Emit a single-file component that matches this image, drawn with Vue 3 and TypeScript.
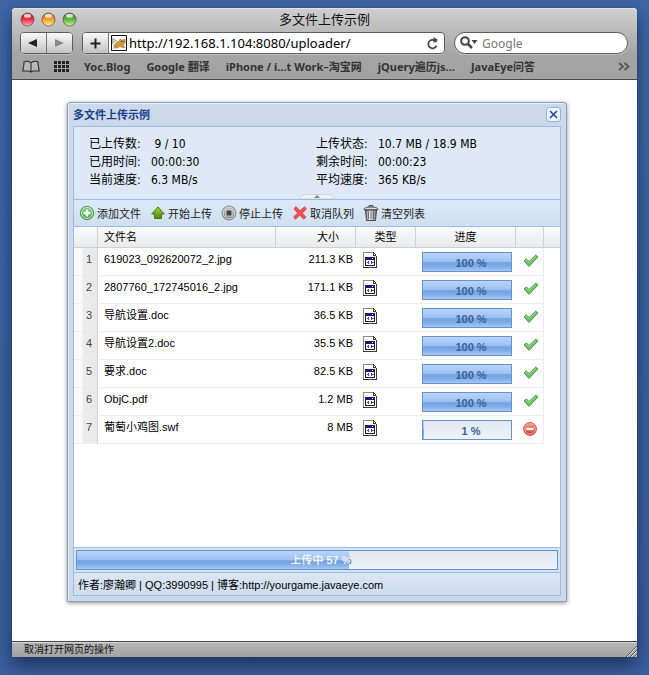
<script setup lang="ts">
import { ref } from 'vue'

interface UploadFile {
  name: string
  size: string
  percent: number
  done: boolean
}

const title = '多文件上传示例'
const address = ref('http://192.168.1.104:8080/uploader/')
const search = ref('')

const uploadedMb = 10.7
const totalMb = 18.9
const share = (uploadedMb / totalMb) * 100
const total = Math.round(share)

const bookmarks: string[] = [
  'Yoc.Blog',
  'Google 翻译',
  'iPhone / i…t Work–淘宝网',
  'jQuery遍历js…',
  'JavaEye问答',
]

const stats: [string, string][] = [
  ['已上传数:', '\u00a09 / 10'],
  ['上传状态:', `${uploadedMb} MB / ${totalMb} MB`],
  ['已用时间:', '00:00:30'],
  ['剩余时间:', '00:00:23'],
  ['当前速度:', '6.3 MB/s'],
  ['平均速度:', '365 KB/s'],
]

const files: UploadFile[] = [
  { name: '619023_092620072_2.jpg', size: '211.3 KB', percent: 100, done: true },
  { name: '2807760_172745016_2.jpg', size: '171.1 KB', percent: 100, done: true },
  { name: '导航设置.doc', size: '36.5 KB', percent: 100, done: true },
  { name: '导航设置2.doc', size: '35.5 KB', percent: 100, done: true },
  { name: '要求.doc', size: '82.5 KB', percent: 100, done: true },
  { name: 'ObjC.pdf', size: '1.2 MB', percent: 100, done: true },
  { name: '葡萄小鸡图.swf', size: '8 MB', percent: 1, done: false },
]
</script>

<template>
  <div class="desktop">
    <svg class="defs" width="0" height="0" aria-hidden="true">
      <defs>
        <linearGradient id="g-red" x2="0" y2="1"><stop offset="0" stop-color="#b8101c" /><stop offset=".5" stop-color="#ee3344" /><stop offset="1" stop-color="#ffb0b4" /></linearGradient>
        <linearGradient id="g-amber" x2="0" y2="1"><stop offset="0" stop-color="#cc5d10" /><stop offset=".5" stop-color="#f6a02c" /><stop offset="1" stop-color="#fff293" /></linearGradient>
        <linearGradient id="g-lime" x2="0" y2="1"><stop offset="0" stop-color="#2f7d23" /><stop offset=".5" stop-color="#5cb83f" /><stop offset="1" stop-color="#c8f59c" /></linearGradient>
        <linearGradient id="g-add" x2="0" y2="1"><stop offset="0" stop-color="#8fd08b" /><stop offset="1" stop-color="#3f9f43" /></linearGradient>
        <linearGradient id="g-up" x2="0" y2="1"><stop offset="0" stop-color="#a5d03a" /><stop offset="1" stop-color="#4c8a0c" /></linearGradient>
        <linearGradient id="g-stop" x2="0" y2="1"><stop offset="0" stop-color="#c9c9c9" /><stop offset="1" stop-color="#777" /></linearGradient>
        <linearGradient id="g-can" x2="1" y2="0"><stop offset="0" stop-color="#777" /><stop offset=".4" stop-color="#eee" /><stop offset="1" stop-color="#777" /></linearGradient>
        <linearGradient id="g-err" x2="0" y2="1"><stop offset="0" stop-color="#f4a090" /><stop offset="1" stop-color="#d93a2e" /></linearGradient>
      </defs>
    </svg>

    <div class="browser">
      <header class="chrome">
        <div class="titlebar">
          <div class="lights">
            <button v-for="(c, i) in ['red', 'amber', 'lime']" :key="c" :aria-label="['关闭', '最小化', '缩放'][i]">
              <svg width="15" height="15" viewBox="0 0 15 15">
                <circle cx="7.5" cy="7.5" r="6.5" :fill="`url(#g-${c})`" stroke="#3a2a2a" stroke-opacity=".55" />
                <ellipse cx="7.5" cy="3.8" rx="3.6" ry="2" fill="#fff" fill-opacity=".75" />
              </svg>
            </button>
          </div>
          <h1>{{ title }}</h1>
          <div class="lights-balance"></div>
        </div>

        <div class="navbar">
          <div class="nav-group">
            <button aria-label="后退"><svg width="10" height="10"><path d="M0 5 9 1v8z" fill="#222" /></svg></button>
            <button aria-label="前进"><svg width="10" height="10"><path d="M10 5 1 1v8z" fill="#888" /></svg></button>
          </div>
          <div class="address">
            <button aria-label="添加书签"><svg width="11" height="11"><path d="M5.500 .5v10M.5 5.500h10" stroke="#222" stroke-width="2" /></svg></button>
            <svg class="favicon" width="16" height="16" viewBox="0 0 16 16">
              <path d="M.5.5h15v15H.5z" fill="#fff" stroke="#111" />
              <path d="m1.500 3 4 2.500L1.500 9zM1.500 14l3-3" fill="#ccc" stroke="#999" stroke-width=".6" />
              <path d="M2.500 11 6 7l2-.5L9 4l1.500 1h2L14 3.500V8l-2 2 2 2.500h-3L9 11.500l-3 1.500H3l2-2z" fill="#cf9a3e" stroke="#8b6424" stroke-width=".5" />
              <path d="M10 6.500h1M12.500 6.500h.8" stroke="#302010" />
            </svg>
            <input v-model="address" aria-label="地址" type="text" />
            <button class="reload" aria-label="重新载入">
              <svg width="13" height="13" viewBox="0 0 13 13"><path d="M10.300 5.200A4.200 4.200 0 1 0 10.500 8.500M6 3h3" fill="none" stroke="#444" stroke-width="1.700" /><path d="M7.500 0 12 3 7.500 6z" fill="#444" /></svg>
            </button>
          </div>
          <label class="search">
            <svg width="18" height="14" viewBox="0 0 18 14"><circle cx="5" cy="5" r="3.800" fill="none" stroke="#444" stroke-width="2" /><path d="m8 8 4 4" stroke="#444" stroke-width="2.500" /><path d="M11.500 4h6l-3 4z" fill="#444" /></svg>
            <input v-model="search" type="text" placeholder="Google" aria-label="Google" />
          </label>
        </div>

        <nav class="bookmarks">
          <button aria-label="书签"><svg width="18" height="13" viewBox="0 0 18 13"><path d="M9 3C7 .5 3.500 1 2 2v2L.8 11h5.400c1 0 2 .4 2.800 1 .8-.6 1.800-1 2.800-1h5.400L16 4V2c-1.500-1-5-1.500-7 1zv9" fill="#b9b9b9" stroke="#2c2c2c" stroke-width="1.100" /></svg></button>
          <button class="top-sites" aria-label="热门站点"><svg width="16" height="11"><g fill="#222"><template v-for="r in 3" :key="r"><rect v-for="c in 4" :key="c" :x="(c - 1) * 4" :y="(r - 1) * 4" width="3" height="3" /></template></g></svg></button>
          <a v-for="b in bookmarks" :key="b" href="#">{{ b }}</a>
          <button class="more" aria-label="更多书签"><svg width="12" height="9"><path d="m1 1 4 3.500L1 8M6.500 1l4 3.500L6.500 8" fill="none" stroke="#555" stroke-width="1.800" /></svg></button>
        </nav>
      </header>

      <main class="page">
        <section class="dialog">
          <header class="dialog-head">
            <h2>{{ title }}</h2>
            <button aria-label="关闭窗口"><svg width="9" height="9"><path d="m1 1 7 7M8 1 1 8" stroke="#24479b" stroke-width="1.600" /></svg></button>
          </header>
          <div class="dialog-body">
            <div class="summary">
              <dl>
                <div v-for="s in stats" :key="s[0]"><dt>{{ s[0] }}</dt><dd>{{ s[1] }}</dd></div>
              </dl>
              <button class="collapse" aria-label="折叠"><svg width="36" height="5"><path d="M0 5 4 .5h28L36 5z" fill="#eef1f3" stroke="#c9d3df" /><path d="m15 4 3-3 3 3z" fill="#888" /></svg></button>
            </div>

            <div class="toolbar">
              <button>
                <svg width="16" height="16" viewBox="0 0 16 16"><circle cx="8" cy="8" r="6.700" fill="url(#g-add)" stroke="#459b49" /><circle cx="8" cy="8" r="5.500" fill="none" stroke="#c8ebc6" /><path d="M8 4.500v7M4.500 8h7" stroke="#fff" stroke-width="2.400" /></svg>
                添加文件
              </button>
              <button>
                <svg width="16" height="16" viewBox="0 0 16 16"><path d="m8 2 6.300 7h-2.800v4.500h-7V9H1.700z" fill="url(#g-up)" stroke="#48760c" /></svg>
                开始上传
              </button>
              <button>
                <svg width="16" height="16" viewBox="0 0 16 16"><circle cx="8" cy="8" r="7" fill="url(#g-stop)" stroke="#8a8a8a" /><circle cx="8" cy="8" r="5.800" fill="none" stroke="#d8d8d8" /><path d="M5 5h6v6H5z" fill="#444" stroke="#eee" stroke-width=".8" /></svg>
                停止上传
              </button>
              <button>
                <svg width="16" height="16" viewBox="0 0 16 16"><path d="m4 1.500 4 4.300 4.500-4L14.500 4l-4.200 4.200 3.700 4-2.300 2-3.900-4-4.300 4-2-2.200 4.200-4L2 4z" fill="#f2504e" stroke="#d2373a" stroke-width=".7" /></svg>
                取消队列
              </button>
              <button>
                <svg width="16" height="16" viewBox="0 0 16 16"><path d="M2.500 5h11l-1 10.500h-9z" fill="url(#g-can)" stroke="#444" /><path d="M5.500 6.500v7.500M8 6.500v7.500M10.500 6.500v7.500" stroke="#555" stroke-width=".8" /><path d="M1 4.800C1 3 3 2 8 2s7 1 7 2.800z" fill="#ddd" stroke="#444" /><path d="M6 2V.7h4V2" fill="none" stroke="#444" /></svg>
                清空列表
              </button>
            </div>

            <div class="grid">
              <table>
                <colgroup><col class="c-num" /><col /><col class="c-size" /><col class="c-type" /><col class="c-prog" /><col class="c-state" /><col class="c-rest" /></colgroup>
                <thead>
                  <tr><th></th><th class="left">文件名</th><th class="size-head">大小</th><th>类型</th><th>进度</th><th></th><th class="rest"></th></tr>
                </thead>
                <tbody>
                  <tr v-for="(f, i) in files" :key="f.name">
                    <td class="num">{{ i + 1 }}</td>
                    <td>{{ f.name }}</td>
                    <td class="size">{{ f.size }}</td>
                    <td class="icon">
                      <svg width="14" height="16" viewBox="0 0 14 16" shape-rendering="crispEdges">
                        <path d="M0 0h10l4 4v12H0z" fill="#fff" />
                        <path d="M0 0h10v1H1v14H0z" fill="#8a8a80" />
                        <path d="M0 15h14v1H0zM13 4h1v12h-1zM10 0h1v3h2v1h-3zM11 1h1v1h-1zM12 2h1v1h-1z" fill="#3c3c3c" />
                        <path d="M2 5h10v9H2z" fill="#222" />
                        <path d="M3 6h8v2H3z" fill="#14149c" />
                        <path d="M9 6h1v1H9z" fill="#fff" />
                        <path d="M3 8h8v5H3z" fill="#fff" />
                        <path d="M4 10h2v1H4zM5 9h1v3H5z" fill="#e02424" />
                        <path d="M8 10h3v1H8zM8 9h1v3H8z" fill="#2448d8" />
                      </svg>
                    </td>
                    <td class="prog">
                      <div class="bar">
                        <div class="fill" :style="{ width: f.percent + '%' }"></div>
                        <span>{{ f.percent }} %</span>
                      </div>
                    </td>
                    <td class="state">
                      <svg v-if="f.done" width="16" height="14" viewBox="0 0 16 14"><path d="m1 7 2.300-2.200L6 7.500 12.800 1 15 3 6 12.500z" fill="#6cbd62" stroke="#469a46" stroke-width=".9" /><path d="m2.500 7 1-.8L6 8.800 13 2.300" fill="none" stroke="#a5dc98" stroke-width=".9" /></svg>
                      <svg v-else width="14" height="14" viewBox="0 0 14 14"><circle cx="7" cy="7" r="6.400" fill="url(#g-err)" stroke="#cf4b42" /><circle cx="7" cy="7" r="5.300" fill="none" stroke="#f6b5aa" stroke-width=".8" /><path d="M3.500 7h7" stroke="#fff" stroke-width="2.200" /></svg>
                    </td>
                    <td class="rest"></td>
                  </tr>
                </tbody>
              </table>
            </div>

            <div class="total">
              <div class="bar">
                <span class="under">上传中 {{ total }} %</span>
                <div class="fill" :style="{ width: share + '%' }"></div>
                <span class="over" aria-hidden="true" :style="{ clipPath: `inset(0 ${100 - share}% 0 0)` }">上传中 {{ total }} %</span>
              </div>
            </div>
            <footer class="credits">作者:廖瀚卿 | QQ:3990995 | 博客:http://yourgame.javaeye.com</footer>
          </div>
        </section>
      </main>

      <footer class="status">
        <span>取消打开网页的操作</span>
        <svg width="12" height="12"><path d="M1 12 12 1M5 12l7-7M9 12l3-3" stroke="#555" /><path d="M2 12 12 2M6 12l6-6M10 12l2-2" stroke="#ddd" /></svg>
      </footer>
    </div>
  </div>
</template>

<style>
body {
  background: #4068a8;
}
</style>

<style scoped>
* {
  box-sizing: border-box;
}
button {
  padding: 0;
  border: 0;
  background: none;
  font: inherit;
  color: inherit;
  display: flex;
  align-items: center;
  justify-content: center;
}
svg {
  display: block;
  flex: none;
}
.defs {
  position: absolute;
}
.desktop {
  min-height: 100vh;
  padding: 8px 12px 18px;
  display: flex;
  background: linear-gradient(#3e66a6, #3b5f9e);
  font-family: "Liberation Sans", "Noto Sans CJK SC", sans-serif;
  overflow: hidden;
}
.browser {
  flex: 1;
  min-width: 0;
  display: flex;
  flex-direction: column;
  background: #fff;
  border-radius: 4px 4px 0 0;
  box-shadow: 0 8px 18px rgba(10, 20, 45, 0.6), 0 0 1px #1c2c4c;
}
.chrome {
  border-bottom: 1px solid #4a4a4a;
  border-radius: 4px 4px 0 0;
  background: linear-gradient(#d0d0d0, #a5a5a5 65%, #a2a2a2);
  box-shadow: inset 0 1px #e4e4e4;
  font-family: "Noto Sans", "Noto Sans CJK SC", sans-serif;
}
.titlebar {
  display: flex;
  align-items: center;
  height: 24px;
  padding: 0 8px 2px;
}
.lights,
.lights-balance {
  display: flex;
  gap: 6px;
  width: 60px;
}
h1 {
  flex: 1;
  margin: 0;
  text-align: center;
  font-size: 13px;
  font-weight: 400;
  line-height: 20px;
  color: #111;
}
.navbar {
  display: flex;
  gap: 9px;
  padding: 0 9px 0 8px;
}
.nav-group,
.address,
.search {
  display: flex;
  align-items: center;
  height: 22px;
  border: 1px solid #5c5c5c;
  border-radius: 4px;
  background: #fff;
  overflow: hidden;
  box-shadow: 0 1px rgba(255, 255, 255, 0.3);
}
.nav-group {
  width: 53px;
}
.nav-group button,
.address > button:first-child {
  width: 26px;
  height: 20px;
  background: linear-gradient(#fafafa, #c2c2c2);
}
.nav-group button:first-child,
.address > button:first-child {
  border-right: 1px solid #777;
}
.address {
  flex: 1;
}
.favicon {
  margin: 0 2px;
}
input {
  flex: 1;
  min-width: 0;
  width: 0;
  height: 20px;
  padding: 0;
  border: 0;
  outline: 0;
  background: none;
  font-family: inherit;
  font-size: 13px;
  color: #000;
}
.reload {
  width: 24px;
}
.search {
  width: 174px;
  padding: 0 5px;
  gap: 4px;
  border-radius: 11px;
}
.search input {
  font-size: 12px;
}
.search input::placeholder {
  color: #777;
  opacity: 1;
}
.bookmarks {
  display: flex;
  align-items: center;
  gap: 16px;
  height: 25px;
  padding: 0 7px 1px 10px;
  font-size: 11px;
  font-weight: 700;
  white-space: nowrap;
}
.bookmarks a {
  color: #333;
  text-decoration: none;
}
.top-sites {
  margin: 0 -2px;
}
.more {
  margin-left: auto;
}
.page {
  flex: 1;
  display: flex;
  padding: 22px 70px 39px 55px;
}
.dialog {
  flex: 1;
  min-width: 0;
  display: flex;
  flex-direction: column;
  padding: 0 5px 5px;
  border: 1px solid #86a0bf;
  border-radius: 3px 3px 0 0;
  background: #cdd8e8;
  box-shadow: inset 1px 1px #e6eef8, 0 1px 4px rgba(0, 0, 0, 0.45);
}
.dialog-head {
  display: flex;
  align-items: center;
  justify-content: space-between;
  height: 23px;
}
h2 {
  margin: 0;
  font-size: 11px;
  font-weight: 700;
  line-height: 20px;
  color: #15428b;
}
.dialog-head button {
  width: 15px;
  height: 15px;
  border: 1px solid #8db2e3;
  border-radius: 3px;
  background: #eef5ff;
}
.dialog-body {
  flex: 1;
  display: flex;
  flex-direction: column;
  border: 1px solid #99bbe8;
  background: #fff;
  font-size: 11px;
  color: #000;
}
.summary {
  display: flex;
  flex-direction: column;
  align-items: center;
  padding-top: 8px;
  background: #dfe8f6;
}
dl {
  display: grid;
  grid-template-columns: 227fr 244fr;
  align-self: stretch;
  margin: 0;
  padding: 0 0 5px 15px;
  font: 12px/18px "DejaVu Sans Condensed", "Noto Sans", "Noto Sans CJK SC", sans-serif;
}
dl div {
  display: flex;
}
dt {
  width: 62px;
}
dd {
  margin: 0;
}
.toolbar {
  display: flex;
  align-items: center;
  gap: 9px;
  height: 28px;
  padding: 0 5px 1px;
  border: solid #99bbe8;
  border-width: 1px 0;
  background: linear-gradient(#dce9f7, #cfdff1);
  color: #222;
}
.toolbar button {
  gap: 2px;
}
.grid {
  flex: 1;
}
table {
  width: 100%;
  table-layout: fixed;
  border-collapse: separate;
  border-spacing: 0;
}
.c-num {
  width: 24px;
}
.c-size {
  width: 80px;
}
.c-type {
  width: 60px;
}
.c-prog {
  width: 100px;
}
.c-state {
  width: 28px;
}
.c-rest {
  width: 16px;
}
th {
  height: 21px;
  padding: 0 6px;
  border-right: 1px solid #d0d0d0;
  border-bottom: 1px solid #d0d0d0;
  background: linear-gradient(#fafafa, #e8eaec);
  font-weight: 400;
  line-height: 18px;
}
th.left {
  text-align: left;
}
th.size-head {
  text-align: right;
  padding-right: 16px;
}
th.rest {
  border-right: 0;
}
td {
  height: 28px;
  padding: 4px 3px 0 6px;
  border-bottom: 1px solid #ededed;
  vertical-align: top;
  line-height: 14px;
}
td.num {
  padding: 4px 5px 0 0;
  border-right: 1px solid #d0d0d0;
  background: linear-gradient(90deg, #fafafa 8px, #ececec 9px, #e8e8e8);
  color: #444;
  text-align: right;
}
td.size {
  text-align: right;
}
td.icon {
  padding: 4px 7px 0;
}
td.prog {
  padding: 4px 4px 0 6px;
}
td.state {
  padding: 6px 0 0 7px;
  border-right: 1px solid #ededed;
}
td.rest {
  border: 0;
}
.bar {
  position: relative;
  height: 20px;
  border: 1px solid #6593cf;
  background: linear-gradient(#e0e8f3, #eef2f8);
  text-align: center;
  line-height: 20px;
}
.fill {
  height: 100%;
  background: linear-gradient(#bad4fa, #9dc1f3 48%, #77a6e4 52%, #76a4e3 65%, #a3c5f5);
}
.bar span {
  position: absolute;
  inset: 0;
  padding-left: 8px;
  font-weight: 700;
  color: #396295;
}
.total {
  padding: 2px;
  border: solid #99bbe8;
  border-width: 1px 0;
  background: #d5e3f3;
}
.total .bar {
  line-height: 18px;
}
.total .bar span {
  font-weight: 400;
}
.total .bar .over {
  color: #fff;
  text-shadow: 0 0 1px #fff;
}
.credits {
  height: 22px;
  padding: 0 4px;
  line-height: 24px;
  background: linear-gradient(#dae6f4, #cedcec);
}
.status {
  display: flex;
  align-items: flex-end;
  justify-content: space-between;
  height: 16px;
  padding-left: 12px;
  border-top: 1px solid #4a4a4a;
  background: linear-gradient(#b8b8b8, #a2a2a2);
  box-shadow: inset 0 1px #d2d2d2;
  font-size: 10px;
  line-height: 15px;
  color: #111;
}
</style>
